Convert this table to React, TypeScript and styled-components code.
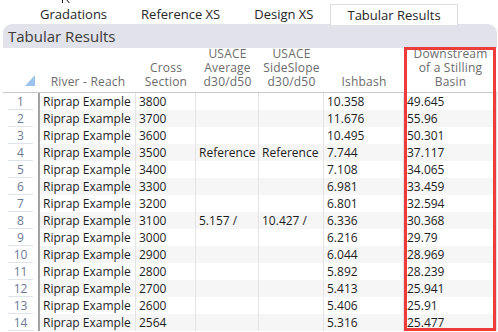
import styled, { createGlobalStyle } from 'styled-components';

const rows: string[][] = [
    ['3800', '', '', '10.358', '49.645'],
    ['3700', '', '', '11.676', '55.96'],
    ['3600', '', '', '10.495', '50.301'],
    ['3500', 'Reference', 'Reference', '7.744', '37.117'],
    ['3400', '', '', '7.108', '34.065'],
    ['3300', '', '', '6.981', '33.459'],
    ['3200', '', '', '6.801', '32.594'],
    ['3100', '5.157 /', '10.427 /', '6.336', '30.368'],
    ['3000', '', '', '6.216', '29.79'],
    ['2900', '', '', '6.044', '28.969'],
    ['2800', '', '', '5.892', '28.239'],
    ['2700', '', '', '5.413', '25.941'],
    ['2600', '', '', '5.406', '25.91'],
    ['2564', '', '', '5.316', '25.477'],
];

const tabs = ['Gradations', 'Reference XS', 'Design XS', 'Tabular Results'];

const headers = [
    ['River - Reach'],
    ['Cross', 'Section'],
    ['USACE', 'Average', 'd30/d50'],
    ['USACE', 'SideSlope', 'd30/d50'],
    ['Ishbash'],
    ['Downstream', 'of a Stilling', 'Basin'],
];

const GlobalStyle = createGlobalStyle`
    html, body {
        margin: 0;
        padding: 0;
        background: #ffffff;
        overflow: hidden;
    }
    body {
        font-family: 'Open Sans', 'Noto Sans', sans-serif;
        color: #222;
    }
`;

export default function App() {
    return (
        <Page>
            <GlobalStyle />
            <TabStrip>
                {tabs.map((t) => (
                    <Tab key={t} active={t === 'Tabular Results'}>
                        {t}
                    </Tab>
                ))}
            </TabStrip>
            <Panel>
                <PanelHeader>Tabular Results</PanelHeader>
                <Grid>
                    <HeadCell>
                        <Corner />
                    </HeadCell>
                    {headers.map((lines, i) => (
                        <HeadCell key={i}>
                            {lines.map((l) => (
                                <span key={l}>{l}</span>
                            ))}
                        </HeadCell>
                    ))}
                    {rows.map((r, i) => (
                        <Row key={i} striped={i % 2 === 1}>
                            <RowNum>{i + 1}</RowNum>
                            <Cell>Riprap Example</Cell>
                            {r.map((v, j) => (
                                <Cell key={j}>{v}</Cell>
                            ))}
                        </Row>
                    ))}
                </Grid>
                <Highlight />
            </Panel>
            {/* mouse pointer sitting over the Gradations tab */}
            <Pointer width="14" height="16" viewBox="0 0 14 16">
                <path
                    d="M1.5 -5 L1.5 11 L5 7.8 L7.5 13.5 L9.6 12.6 L7.2 7 L11.8 7 Z"
                    fill="#fff"
                    stroke="#111"
                    strokeWidth="1"
                    strokeLinejoin="round"
                />
            </Pointer>
        </Page>
    );
}

const Page = styled.div`
    position: relative;
    width: 498px;
    height: 332px;
    overflow: hidden;
`;

const TabStrip = styled.div`
    display: flex;
    align-items: flex-end;
    height: 24px;
    padding-left: 23px;
`;

const Tab = styled.div<{ active?: boolean }>`
    height: 21px;
    padding: 0 16px;
    box-sizing: border-box;
    font-size: 13px;
    line-height: 20px;
    color: #262626;
    background: #fff;
    border: 1px solid ${(p) => (p.active ? '#dcdce2' : 'transparent')};
    border-bottom: none;
    margin-bottom: ${(p) => (p.active ? '-1px' : '0')};
    position: relative;
    z-index: 1;
`;

const Panel = styled.div`
    position: relative;
    margin: 0 1px 0 3px;
    background: #e2e2ea;
    border-radius: 9px 9px 0 0;
    overflow: hidden;
`;

const PanelHeader = styled.div`
    height: 24px;
    padding-left: 5px;
    font-size: 15px;
    line-height: 24px;
    color: #3a3a3a;
`;

const Grid = styled.div`
    display: grid;
    grid-template-columns: 37px 96px 60px 63px 65px 80px 1fr;
    grid-template-rows: 45px;
    grid-auto-rows: 17px;
    background: #fff;
`;

const HeadCell = styled.div`
    display: flex;
    flex-direction: column;
    justify-content: flex-end;
    align-items: center;
    padding-bottom: 3px;
    box-sizing: border-box;
    border-bottom: 1px solid #c9c9c9;
    font-size: 12px;
    line-height: 14px;
    letter-spacing: 0.2px;
    color: #6c6c6c;
    white-space: nowrap;
    position: relative;
`;

const Corner = styled.div`
    position: absolute;
    left: 22px;
    bottom: 6px;
    width: 0;
    height: 0;
    border-left: 10px solid transparent;
    border-bottom: 11px solid #9cc3ee;
`;

const Row = styled.div<{ striped?: boolean }>`
    display: contents;

    & > div:not(:first-child) {
        background: ${(p) => (p.striped ? '#f6f6f6' : '#fff')};
    }
`;

const RowNum = styled.div`
    position: relative;
    text-align: center;
    font-size: 12px;
    line-height: 17px;
    color: #6d7a95;
    border-right: 2px solid #a3a3a3;
    background: #fff;

    &::after {
        content: '';
        position: absolute;
        left: 5px;
        right: 5px;
        bottom: 0;
        height: 1px;
        background: #dfe3ea;
    }
`;

const Cell = styled.div`
    padding-left: 3px;
    font-size: 12px;
    line-height: 17px;
    color: #1e1e1e;
    white-space: nowrap;
    overflow: hidden;
    border-right: 1px solid #e4e4e4;
`;

const Highlight = styled.div`
    position: absolute;
    left: 401px;
    top: 23px;
    width: 92px;
    height: 284px;
    border: 3px solid #ee3b3b;
    box-sizing: border-box;
    pointer-events: none;
`;

const Pointer = styled.svg`
    position: absolute;
    left: 61px;
    top: 0;
`;
